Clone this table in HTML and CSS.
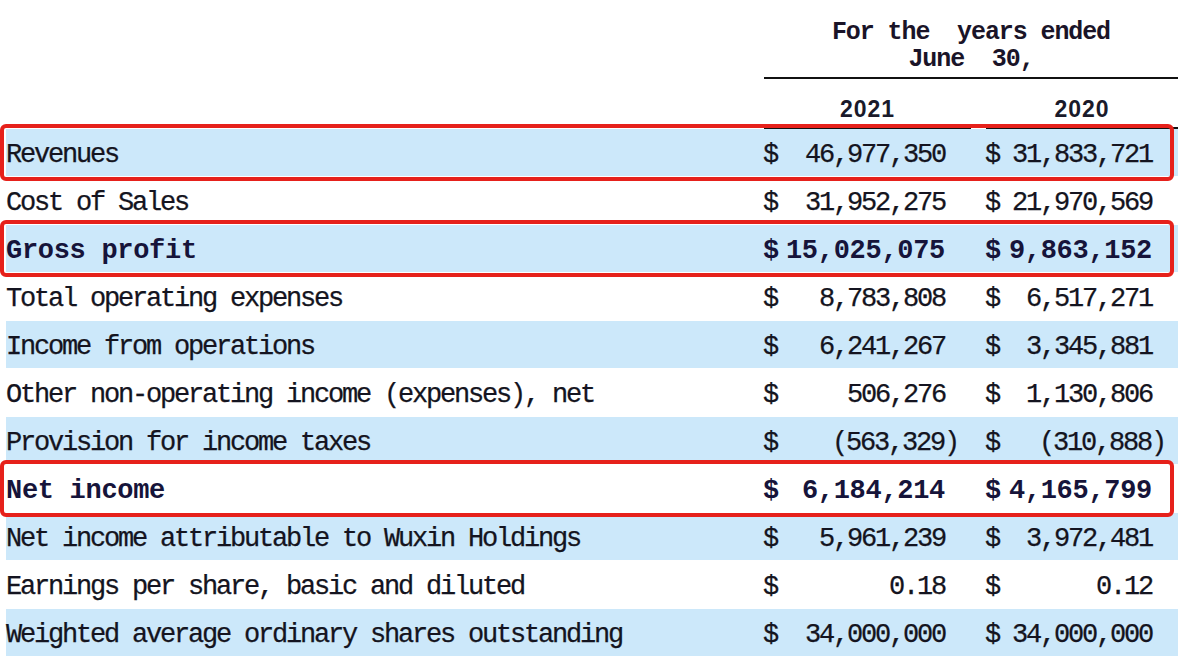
FILE: index.html
```html
<!DOCTYPE html>
<html lang="en">
<head>
<meta charset="utf-8">
<title>Income statement</title>
<link rel="stylesheet" href="styles.css">
</head>
<body>
<div class="sheet">
  <div class="head">
    <div class="head-title">For the  years ended<br>June  30,</div>
    <div class="year year-a">2021</div>
    <div class="year year-b">2020</div>
  </div>

  <div class="row blue boxed">
    <div class="label">Revenues</div>
    <div class="amt"><span>$</span><span>46,977,350</span></div>
    <div class="amt amt-b"><span>$</span><span>31,833,721</span></div>
  </div>
  <div class="row">
    <div class="label">Cost of Sales</div>
    <div class="amt"><span>$</span><span>31,952,275</span></div>
    <div class="amt amt-b"><span>$</span><span>21,970,569</span></div>
  </div>
  <div class="row blue boxed bold">
    <div class="label">Gross profit</div>
    <div class="amt"><span>$</span><span>15,025,075</span></div>
    <div class="amt amt-b"><span>$</span><span>9,863,152</span></div>
  </div>
  <div class="row">
    <div class="label">Total operating expenses</div>
    <div class="amt"><span>$</span><span>8,783,808</span></div>
    <div class="amt amt-b"><span>$</span><span>6,517,271</span></div>
  </div>
  <div class="row blue">
    <div class="label">Income from operations</div>
    <div class="amt"><span>$</span><span>6,241,267</span></div>
    <div class="amt amt-b"><span>$</span><span>3,345,881</span></div>
  </div>
  <div class="row">
    <div class="label">Other non-operating income (expenses), net</div>
    <div class="amt"><span>$</span><span>506,276</span></div>
    <div class="amt amt-b"><span>$</span><span>1,130,806</span></div>
  </div>
  <div class="row blue">
    <div class="label">Provision for income taxes</div>
    <div class="amt"><span>$</span><span>(563,329<span class="paren">)</span></span></div>
    <div class="amt amt-b"><span>$</span><span>(310,888<span class="paren">)</span></span></div>
  </div>
  <div class="row boxed bold">
    <div class="label">Net income</div>
    <div class="amt"><span>$</span><span>6,184,214</span></div>
    <div class="amt amt-b"><span>$</span><span>4,165,799</span></div>
  </div>
  <div class="row blue">
    <div class="label">Net income attributable to Wuxin Holdings</div>
    <div class="amt"><span>$</span><span>5,961,239</span></div>
    <div class="amt amt-b"><span>$</span><span>3,972,481</span></div>
  </div>
  <div class="row">
    <div class="label">Earnings per share, basic and diluted</div>
    <div class="amt"><span>$</span><span>0.18</span></div>
    <div class="amt amt-b"><span>$</span><span>0.12</span></div>
  </div>
  <div class="row blue">
    <div class="label">Weighted average ordinary shares outstanding</div>
    <div class="amt"><span>$</span><span>34,000,000</span></div>
    <div class="amt amt-b"><span>$</span><span>34,000,000</span></div>
  </div>
</div>
</body>
</html>
```

FILE: styles.css
```css
html, body {
  margin: 0;
  padding: 0;
  background: #ffffff;
}

body {
  width: 1178px;
  height: 656px;
  overflow: hidden;
  color: #141420;
  font-family: "Liberation Mono", "DejaVu Sans Mono", monospace;
}

.sheet {
  margin-left: 6px;
  width: 1172px;
}

.head {
  display: grid;
  grid-template-columns: 758px 207px 15px 192px;
}

.head-title {
  grid-column: 2 / 5;
  grid-row: 1;
  text-align: center;
  white-space: pre;
  font-weight: bold;
  font-size: 25px;
  letter-spacing: -1.1px;
  line-height: 27px;
  padding-top: 19px;
  padding-bottom: 4px;
  border-bottom: 2px solid #111;
  color: #1a1428;
}

.year {
  grid-row: 2;
  text-align: center;
  font-family: "Liberation Sans", Arial, sans-serif;
  font-weight: bold;
  font-size: 23px;
  letter-spacing: 1px;
  line-height: 24px;
  padding-top: 18px;
  padding-bottom: 6px;
  border-bottom: 2px solid #111;
  color: #1a1a2a;
}

.year-a { grid-column: 2; }
.year-b { grid-column: 4; }

.row {
  display: grid;
  grid-template-columns: 757px 208px 14px 193px;
  box-sizing: border-box;
  height: 47px;
  padding-top: 6px;
  margin-bottom: 1px;
  align-items: center;
  font-size: 27px;
  letter-spacing: -2.2px;
  line-height: 41px;
  white-space: pre;
  -webkit-text-stroke: 0.25px #141420;
}

.row.blue {
  background: #cce8fa;
}

.row.bold {
  font-weight: bold;
  letter-spacing: -0.3px;
  color: #16143a;
  -webkit-text-stroke: 0;
}

.row.boxed {
  position: relative;
}

.row.boxed::after {
  content: "";
  position: absolute;
  left: -6px;
  right: 4px;
  top: -5px;
  bottom: -5px;
  border: 4px solid #e6211b;
  border-radius: 6px;
  pointer-events: none;
}

.label {
  grid-column: 1;
}

.amt {
  grid-column: 2;
  display: flex;
  justify-content: space-between;
  padding-right: 26px;
}

.amt-b {
  grid-column: 4;
}

.paren {
  margin-right: -13px;
}
```
